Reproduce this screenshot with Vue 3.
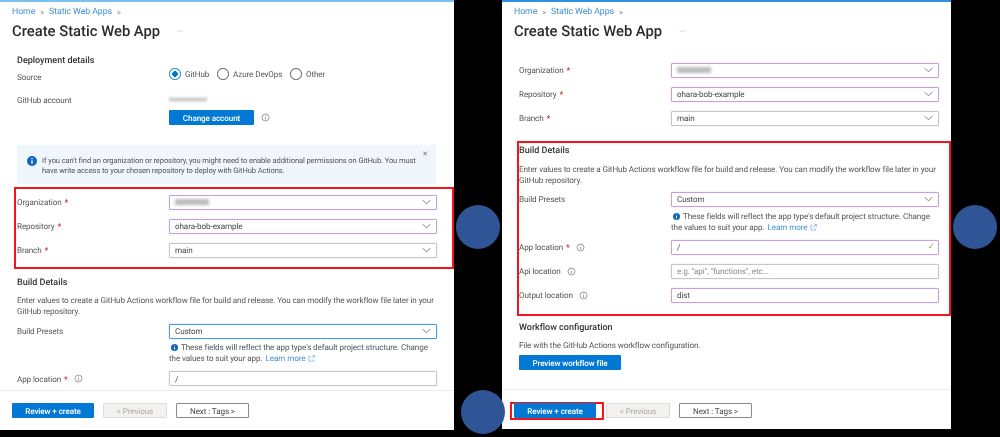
<script setup>
const orgRows = [
  { label: 'Organization', blurred: true, cls: 'edited' },
  { label: 'Repository', value: 'ohara-bob-example', cls: 'edited' },
  { label: 'Branch', value: 'main', cls: '' },
]
</script>

<template>
  <div class="screen">
    <svg class="defs" aria-hidden="true">
      <symbol id="chev" viewBox="0 0 12 8"><path d="M1 1.5 6 6.5 11 1.5" fill="none" stroke="#555" stroke-width="1"/></symbol>
      <symbol id="info" viewBox="0 0 10 10"><circle cx="5" cy="5" r="3.9" fill="none" stroke="#777" stroke-width=".8"/><path d="M5 4.4V7.3M5 2.7V3.5" stroke="#777" stroke-width=".8"/></symbol>
      <symbol id="infofill" viewBox="0 0 10 10"><circle cx="5" cy="5" r="5" fill="#1366c0"/><path d="M5 4.3V7.8M5 2.1V3.2" stroke="#fff" stroke-width="1.3"/></symbol>
      <symbol id="ext" viewBox="0 0 8 8"><path d="M3 1.5H1V7H6.5V5M4 4 7.3.7M5 .6H7.4V3" fill="none" stroke="#3f8fd8" stroke-width=".6"/></symbol>
    </svg>

    <!-- Left panel -->
    <section class="panel left">
      <header class="head">
        <nav class="crumbs"><a>Home</a><i>&gt;</i><a>Static Web Apps</a><i>&gt;</i></nav>
        <div class="titleline"><h1>Create Static Web App</h1><span class="dots">···</span></div>
      </header>
      <div class="body">
        <h2 class="first">Deployment details</h2>
        <div class="source">
          <span class="label src-label">Source</span>
          <div class="radios">
            <span class="radio on"></span><span class="rtext r1">GitHub</span>
            <span class="radio"></span><span class="rtext r2">Azure DevOps</span>
            <span class="radio"></span><span class="rtext r3">Other</span>
          </div>
        </div>
        <div class="account">
          <span class="label">GitHub account</span>
          <span class="smudge acct"></span>
        </div>
        <div class="btnrow">
          <button class="primary change">Change account</button>
          <svg class="ic"><use href="#info"/></svg>
        </div>
        <div class="banner">
          <svg class="bannericon"><use href="#infofill"/></svg>
          <p>If you can't find an organization or repository, you might need to enable additional permissions on GitHub. You must have write access to your chosen repository to deploy with GitHub Actions.</p>
          <span class="close">✕</span>
        </div>
        <div class="redbox l-red">
          <div v-for="r in orgRows" :key="r.label" class="row">
            <span class="label">{{ r.label }} <b>*</b></span>
            <div class="input" :class="r.cls">
              <span v-if="r.blurred" class="smudge org"></span>
              <span v-else>{{ r.value }}</span>
              <svg class="chev"><use href="#chev"/></svg>
            </div>
          </div>
        </div>
        <h2 class="l-build">Build Details</h2>
        <p class="desc">Enter values to create a GitHub Actions workflow file for build and release. You can modify the workflow file later in your GitHub repository.</p>
        <div class="row l-preset">
          <span class="label">Build Presets</span>
          <div class="input focus"><span>Custom</span><svg class="chev"><use href="#chev"/></svg></div>
        </div>
        <div class="hint l-hint">
          <div class="hline"><svg class="hinticon"><use href="#infofill"/></svg><span>These fields will reflect the app type's default project structure. Change</span></div>
          <div class="hline"><span>the values to suit your app.</span><a>Learn more</a><svg class="exticon"><use href="#ext"/></svg></div>
        </div>
        <div class="row">
          <span class="label">App location <b>*</b><svg class="ic lab"><use href="#info"/></svg></span>
          <div class="input"><span>/</span></div>
        </div>
      </div>
      <footer class="foot">
        <button class="primary review">Review + create</button>
        <button class="disabled">&lt; Previous</button>
        <button class="next">Next : Tags &gt;</button>
      </footer>
    </section>

    <!-- Right panel -->
    <section class="panel right">
      <header class="head">
        <nav class="crumbs"><a>Home</a><i>&gt;</i><a>Static Web Apps</a><i>&gt;</i></nav>
        <div class="titleline"><h1>Create Static Web App</h1><span class="dots">···</span></div>
      </header>
      <div class="body">
        <div class="r-top">
          <div v-for="r in orgRows" :key="r.label" class="row">
            <span class="label">{{ r.label }} <b>*</b></span>
            <div class="input" :class="r.cls">
              <span v-if="r.blurred" class="smudge org"></span>
              <span v-else>{{ r.value }}</span>
              <svg class="chev"><use href="#chev"/></svg>
            </div>
          </div>
        </div>
        <div class="redbox r-red">
          <h2 class="r-build">Build Details</h2>
          <p class="desc r-desc">Enter values to create a GitHub Actions workflow file for build and release. You can modify the workflow file later in your GitHub repository.</p>
          <div class="row r-preset">
            <span class="label">Build Presets</span>
            <div class="input edited"><span>Custom</span><svg class="chev"><use href="#chev"/></svg></div>
          </div>
          <div class="hint r-hint">
            <div class="hline"><svg class="hinticon"><use href="#infofill"/></svg><span>These fields will reflect the app type's default project structure. Change</span></div>
            <div class="hline"><span>the values to suit your app.</span><a>Learn more</a><svg class="exticon"><use href="#ext"/></svg></div>
          </div>
          <div class="row">
            <span class="label">App location <b>*</b><svg class="ic lab"><use href="#info"/></svg></span>
            <div class="input edited"><span>/</span><span class="check">✓</span></div>
          </div>
          <div class="row">
            <span class="label">Api location<svg class="ic lab"><use href="#info"/></svg></span>
            <div class="input"><span class="ph">e.g. "api", "functions", etc...</span></div>
          </div>
          <div class="row">
            <span class="label">Output location<svg class="ic lab"><use href="#info"/></svg></span>
            <div class="input edited"><span>dist</span></div>
          </div>
        </div>
        <h2 class="r-work">Workflow configuration</h2>
        <p class="desc filewith">File with the GitHub Actions workflow configuration.</p>
        <button class="primary preview">Preview workflow file</button>
      </div>
      <footer class="foot">
        <span class="reviewbox"><button class="primary review">Review + create</button></span>
        <button class="disabled">&lt; Previous</button>
        <button class="next">Next : Tags &gt;</button>
      </footer>
    </section>

    <span class="dot d1"></span>
    <span class="dot d2"></span>
    <span class="dot d3"></span>
  </div>
</template>

<style>
html, body { margin: 0; background: #000; }
</style>

<style scoped>
.screen {
  position: relative;
  display: flex;
  align-items: flex-start;
  gap: 48px;
  width: 1000px;
  height: 437px;
  overflow: hidden;
  background: #000;
  font-family: Roboto, "Open Sans", sans-serif;
  font-size: 8.1px;
  letter-spacing: -0.1px;
  text-rendering: geometricPrecision;
  color: #444;
}
.defs { position: absolute; width: 0; height: 0; }
.panel {
  display: flex;
  flex-direction: column;
  background: #fff;
  overflow: hidden;
  filter: blur(0.4px);
}
.left { width: 454px; height: 430px; border-top: 2px solid #7cc0f0; box-sizing: border-box; }
.right { width: 449px; height: 429px; border-top: 2px solid #2f8fe0; box-sizing: border-box; }
.head { flex: none; height: 40px; padding-left: 12px; }
.crumbs { box-sizing: border-box; display: flex; align-items: center; gap: 5px; height: 18px; padding-top: 2px; font-size: 8.8px; }
.crumbs a { color: #3f8fd8; }
.crumbs i { font-style: normal; color: #888; font-size: 7.5px; }
.titleline { display: flex; align-items: center; height: 22px; }
h1 { margin: 0; font-size: 14.8px; font-weight: 500; letter-spacing: 0; color: #2b2b2b; }
.dots { margin-left: 17px; color: #999; font-size: 8px; }
.body { flex: 1; min-height: 0; padding-left: 17px; overflow: hidden; }
h2 { margin: 0; font-size: 9px; font-weight: 500; letter-spacing: 0; color: #333; height: 14px; line-height: 14px; }
h2.first { margin-top: 12px; }
.label { box-sizing: border-box; display: flex; align-items: center; gap: 3px; flex: none; width: 152px; color: #555; }
.label b { color: #c4262e; font-weight: 700; }
.source { display: flex; height: 13px; }
.src-label { padding-top: 4px; height: 14px; }
.radios { display: flex; align-items: center; height: 12px; }
.radio {
  flex: none;
  box-sizing: border-box;
  width: 11.5px; height: 11.5px;
  border: 1px solid #555;
  border-radius: 50%;
  background: #fff;
}
.radio.on { border-color: #0078d4; background: radial-gradient(circle, #0078d4 0 2.6px, #fff 3px); }
.rtext { flex: none; margin-left: 4.5px; color: #555; white-space: nowrap; }
.r1 { width: 32px; }
.r2 { width: 57px; }
.account { display: flex; align-items: center; height: 14px; margin-top: 12px; }
.smudge { display: inline-block; background: #aaa; filter: blur(1.4px); opacity: .8; }
.acct { width: 38px; height: 3px; margin-top: -2px; }
.org { width: 34px; height: 6px; }
.btnrow { display: flex; align-items: center; margin: 3px 0 0 152px; height: 15px; }
button { font-family: inherit; font-size: 8.1px; letter-spacing: inherit; text-rendering: inherit; box-sizing: border-box; height: 15px; padding: 0; border-radius: 1px; }
.primary { background: #0078d4; color: #fff; font-weight: 500; border: 0; }
.change { width: 85px; }
.ic { width: 9px; height: 9px; margin-left: 7px; }
.ic.lab { margin-left: 3px; }
.banner {
  position: relative;
  box-sizing: border-box;
  display: flex;
  width: 419px; height: 39px;
  margin-top: 20px;
  padding: 11px 14px 0 10px;
  background: #eff6fc;
}
.bannericon { flex: none; width: 10px; height: 10px; margin: 0 5px 0 0; }
.banner p { margin: 0; font-size: 7.55px; line-height: 9.5px; color: #555; }
.close { position: absolute; right: 8px; top: 5px; font-size: 7px; color: #777; }
.redbox { box-sizing: border-box; border: 2px solid #f5131c; }
.l-red { width: 440px; height: 82px; margin: 3px 0 0 -3px; padding: 1px 0 0 1px; }
.row { display: flex; align-items: center; height: 24px; }
.input {
  box-sizing: border-box;
  display: flex;
  align-items: center;
  width: 268px; height: 15px;
  padding: 0 0 0 5px;
  border: 1px solid #c8c6c4;
  box-shadow: 0 0 1px #b5b3b1;
  border-radius: 1px;
  color: #444;
}
.edited { border-color: #c79fdc; box-shadow: 0 0 1px #c79fdc; }
.focus { border-color: #4a9adf; box-shadow: 0 0 1px #4a9adf; }
.chev { width: 9px; height: 6px; margin-left: auto; margin-right: 5px; }
.ph { color: #888; }
.check { margin-left: auto; margin-right: 3px; color: #7fba5a; font-size: 9px; }
.l-build { margin-top: 7px; }
.desc { margin: 4.5px 0 0; width: 420px; line-height: 11px; color: #555; }
.l-preset { margin-top: 2.5px; }
.hint { margin-left: 152px; width: 265px; line-height: 11px; color: #555; white-space: nowrap; }
.l-hint { margin-top: -1.5px; margin-bottom: 3px; }
.hline { box-sizing: border-box; display: flex; align-items: center; height: 11px; padding-top: 1px; }
.hinticon { flex: none; width: 7px; height: 7px; margin: 0 3px 0 2px; }
.exticon { flex: none; width: 7px; height: 7px; margin-left: 3px; }
.hint a { margin-left: 3px; color: #3f8fd8; }
.r-top { margin-top: 16px; }
.r-red { width: 434px; height: 175px; margin: 11px 0 0 -2px; }
.r-build { margin-top: 1px; }
.r-desc { margin-top: 5.5px; }
.r-preset { margin-top: 1.5px; }
.r-hint { margin-top: -1px; margin-bottom: 3px; }
.r-work { margin-top: 5px; }
.filewith { margin-top: 5px; }
.preview { display: block; width: 102px; margin-top: 4px; }
.foot {
  flex: none;
  display: flex;
  align-items: center;
  height: 40px;
  box-sizing: border-box;
  padding-left: 12px;
  border-top: 1px solid #eee;
}
.review { width: 82px; }
.disabled { width: 64px; margin-left: 9px; background: #f3f2f1; color: #aaa; border: 1px solid #ddd; }
.next { width: 73px; margin-left: 9px; background: #fff; color: #444; border: 1px solid #8a8886; }
.right .foot { padding: 2px 0 0 8px; }
.reviewbox { box-sizing: border-box; display: flex; align-items: center; width: 94px; height: 18px; padding-left: 2px; border: 2px solid #f5131c; }
.right .disabled { margin-left: 2px; }
.dot { position: absolute; width: 44px; height: 44px; border-radius: 50%; background: #2f5597; }
.d1 { left: 456px; top: 205px; }
.d2 { left: 953px; top: 205px; }
.d3 { left: 461px; top: 390px; }
</style>
